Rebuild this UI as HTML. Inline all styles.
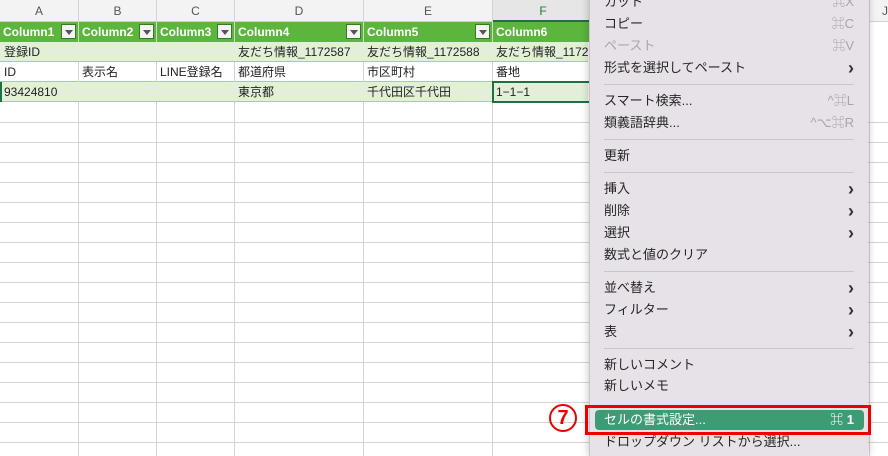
<!DOCTYPE html>
<html style="overflow:hidden;width:888px;height:456px"><head><meta charset="utf-8"><style>
*{margin:0;padding:0;box-sizing:border-box}
body{width:888px;height:456px;overflow:hidden;background:#fff;font-family:"Liberation Sans","Noto Sans CJK JP",sans-serif;position:relative}
.a{position:absolute}
.vl{position:absolute;top:0;width:1px;height:456px;background:#d4d4d4}
.hl{position:absolute;left:0;width:888px;height:1px;background:#d4d4d4}
.hdr{position:absolute;top:0;height:22px;background:#f3f3f3;border-bottom:1px solid #d0d0d0;font-size:12px;color:#555;text-align:center;line-height:22px}
.row{position:absolute;left:0;width:588px;height:20px}
.c{position:absolute;font-size:12px;color:#222;line-height:20px;white-space:nowrap;overflow:hidden}
.th{position:absolute;top:22px;height:20px;background:#5cb53d;color:#fff;font-weight:bold;font-size:12px;line-height:20px;padding-left:3px}
.dd{position:absolute;top:24px;width:15px;height:15px;background:#f4f4f4;border:1px solid #3b7a25}
.dd:after{content:"";position:absolute;left:3px;top:5px;border-left:4px solid transparent;border-right:4px solid transparent;border-top:5px solid #555}
.menu{position:absolute;left:589px;top:-10px;width:279px;height:466px;background:#e7e2e7;box-shadow:0 0 8px rgba(0,0,0,.25);border-left:1px solid #c8c4c8;overflow:hidden}
.mi{position:absolute;left:14px;font-size:13px;color:#262626;line-height:20px;white-space:nowrap}
.sc{position:absolute;right:14px;font-size:13px;color:#a8a4a8;line-height:20px}
.ch{position:absolute;right:14px;font-size:18px;color:#333;line-height:20px;font-weight:bold}
.sep{position:absolute;left:14px;right:14px;height:1px;background:#c9c5c9}
</style></head><body>
<div class="vl" style="left:78px"></div><div class="vl" style="left:156px"></div><div class="vl" style="left:234px"></div><div class="vl" style="left:363px"></div><div class="vl" style="left:492px"></div><div class="vl" style="left:869px"></div>
<div class="hl" style="top:122px"></div><div class="hl" style="top:142px"></div><div class="hl" style="top:162px"></div><div class="hl" style="top:182px"></div><div class="hl" style="top:202px"></div><div class="hl" style="top:222px"></div><div class="hl" style="top:242px"></div><div class="hl" style="top:262px"></div><div class="hl" style="top:282px"></div><div class="hl" style="top:302px"></div><div class="hl" style="top:322px"></div><div class="hl" style="top:342px"></div><div class="hl" style="top:362px"></div><div class="hl" style="top:382px"></div><div class="hl" style="top:402px"></div><div class="hl" style="top:422px"></div><div class="hl" style="top:442px"></div>
<div class="hdr" style="left:0;width:78px">A</div><div class="hdr" style="left:79px;width:77px">B</div><div class="hdr" style="left:157px;width:77px">C</div><div class="hdr" style="left:235px;width:128px">D</div><div class="hdr" style="left:364px;width:128px">E</div><div class="hdr" style="left:493px;width:100px;color:#1e7a3c;background:#e6e6e6;border-bottom:2px solid #1e7145">F</div><div class="hdr" style="left:870px;width:18px;text-align:left;padding-left:12px">J</div>
<div class="th" style="left:0;width:78px">Column1</div><div class="th" style="left:79px;width:77px">Column2</div><div class="th" style="left:157px;width:77px">Column3</div><div class="th" style="left:235px;width:128px">Column4</div><div class="th" style="left:364px;width:128px">Column5</div><div class="th" style="left:493px;width:100px">Column6</div>
<div class="dd" style="left:61px"></div><div class="dd" style="left:139px"></div><div class="dd" style="left:217px"></div><div class="dd" style="left:346px"></div><div class="dd" style="left:475px"></div>
<div class="row" style="top:42px;background:#e2f0d9;border-bottom:1px solid #a9d18e"></div>
<div class="row" style="top:62px;background:#fff;border-bottom:1px solid #a9d18e"></div>
<div class="row" style="top:82px;background:#e2f0d9;border-bottom:1px solid #a9d18e"></div>
<div class="a" style="left:78px;top:62px;width:1px;height:20px;background:#d4d4d4"></div><div class="a" style="left:156px;top:62px;width:1px;height:20px;background:#d4d4d4"></div><div class="a" style="left:234px;top:62px;width:1px;height:20px;background:#d4d4d4"></div><div class="a" style="left:363px;top:62px;width:1px;height:20px;background:#d4d4d4"></div><div class="a" style="left:492px;top:62px;width:1px;height:20px;background:#d4d4d4"></div>
<div class="a" style="left:0;top:82px;width:2px;height:20px;background:#1e7145"></div>
<div class="c" style="left:4px;top:42px">登録ID</div><div class="c" style="left:238px;top:42px;width:124px">友だち情報_1172587</div><div class="c" style="left:367px;top:42px;width:124px">友だち情報_1172588</div><div class="c" style="left:496px;top:42px;width:92px">友だち情報_1172</div>
<div class="c" style="left:4px;top:62px">ID</div><div class="c" style="left:82px;top:62px">表示名</div><div class="c" style="left:160px;top:62px">LINE登録名</div><div class="c" style="left:238px;top:62px">都道府県</div><div class="c" style="left:367px;top:62px">市区町村</div><div class="c" style="left:496px;top:62px">番地</div>
<div class="c" style="left:4px;top:82px">93424810</div><div class="c" style="left:238px;top:82px">東京都</div><div class="c" style="left:367px;top:82px">千代田区千代田</div>
<div class="a" style="left:492px;top:81px;width:100px;height:22px;border:2px solid #1e7145;border-right:none"></div><div class="c" style="left:496px;top:82px">1−1−1</div>
<div class="menu">
<div class="mi" style="top:2px">カット</div><div class="sc" style="top:2px">⌘X</div>
<div class="mi" style="top:24px">コピー</div><div class="sc" style="top:24px">⌘C</div>
<div class="mi" style="top:46px;color:#aaa5aa">ペースト</div><div class="sc" style="top:46px">⌘V</div>
<div class="mi" style="top:68px">形式を選択してペースト</div><div class="ch" style="top:68px">›</div>
<div class="sep" style="top:94px"></div>
<div class="mi" style="top:101px">スマート検索...</div><div class="sc" style="top:101px">^⌘L</div>
<div class="mi" style="top:123px">類義語辞典...</div><div class="sc" style="top:123px">^⌥⌘R</div>
<div class="sep" style="top:149px"></div>
<div class="mi" style="top:156px">更新</div>
<div class="sep" style="top:182px"></div>
<div class="mi" style="top:189px">挿入</div><div class="ch" style="top:189px">›</div>
<div class="mi" style="top:211px">削除</div><div class="ch" style="top:211px">›</div>
<div class="mi" style="top:233px">選択</div><div class="ch" style="top:233px">›</div>
<div class="mi" style="top:255px">数式と値のクリア</div>
<div class="sep" style="top:281px"></div>
<div class="mi" style="top:288px">並べ替え</div><div class="ch" style="top:288px">›</div>
<div class="mi" style="top:310px">フィルター</div><div class="ch" style="top:310px">›</div>
<div class="mi" style="top:332px">表</div><div class="ch" style="top:332px">›</div>
<div class="sep" style="top:358px"></div>
<div class="mi" style="top:365px">新しいコメント</div>
<div class="mi" style="top:386px">新しいメモ</div>
<div class="a" style="left:5px;top:420px;width:269px;height:20px;background:#3e9c74;border-radius:4px"></div>
<div class="mi" style="top:420px;color:#fff">セルの書式設定...</div><div class="sc" style="top:420px;color:#fff;font-weight:bold">⌘ 1</div>
<div class="mi" style="top:442px">ドロップダウン リストから選択...</div>
</div>
<div class="a" style="left:585px;top:405px;width:286px;height:30px;border:3px solid #ee0000"></div>
<div class="a" style="left:549px;top:404px;width:28px;height:28px;border:2px solid #ee0000;border-radius:50%;color:#ee0000;font-weight:bold;font-size:20px;line-height:24px;text-align:center">7</div>
</body></html>
